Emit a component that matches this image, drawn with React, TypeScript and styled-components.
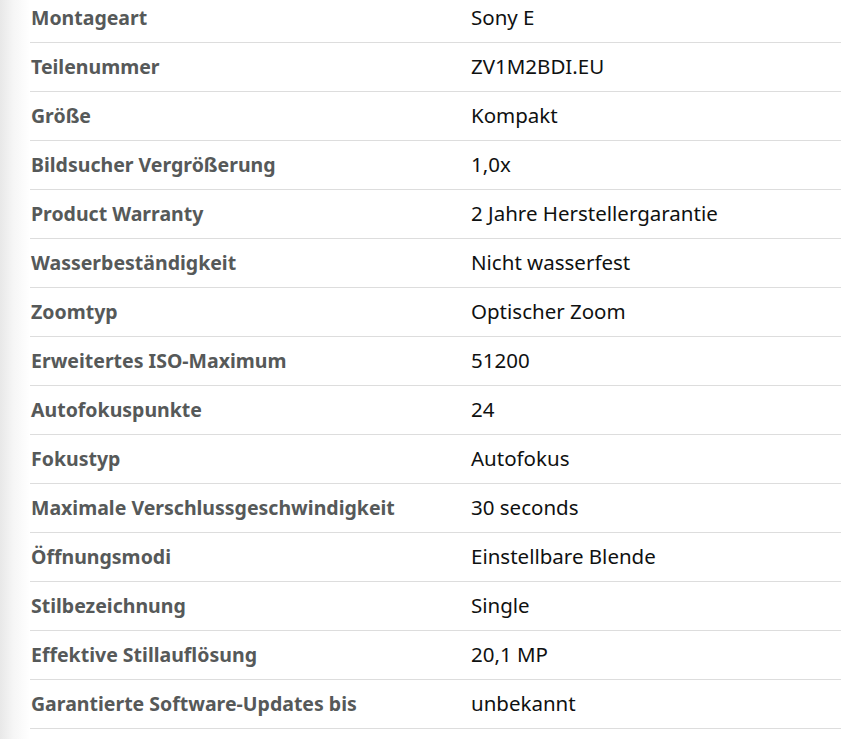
import React from 'react';
import styled, { createGlobalStyle } from 'styled-components';

const GlobalStyle = createGlobalStyle`
  html, body {
    margin: 0;
    padding: 0;
    background: #ffffff;
    overflow: hidden;
  }
`;

const Page = styled.div`
  display: flex;
  height: 739px;
  overflow: hidden;
  font-family: 'Noto Sans', 'Liberation Sans', Arial, sans-serif;
`;

const EdgeShadow = styled.div`
  flex: 0 0 30px;
  background: linear-gradient(to right, #e8e8e8 0%, #f6f6f6 45%, #ffffff 100%);
`;

const SpecTable = styled.div`
  flex: 1;
  margin-top: -6px;
`;

const SpecRow = styled.div`
  display: grid;
  grid-template-columns: 441px 1fr;
  align-items: center;
  box-sizing: border-box;
  height: 49px;
  padding-bottom: 2px;
  border-bottom: 1px solid #dddddd;
`;

const Label = styled.div`
  padding-left: 1px;
  font-size: 19.5px;
  font-weight: 700;
  color: #565959;
  white-space: nowrap;
`;

const Value = styled.div`
  font-size: 20.5px;
  color: #0f1111;
  white-space: nowrap;
`;

const specs: [string, string][] = [
    ['Montageart', 'Sony E'],
    ['Teilenummer', 'ZV1M2BDI.EU'],
    ['Größe', 'Kompakt'],
    ['Bildsucher Vergrößerung', '1,0x'],
    ['Product Warranty', '2 Jahre Herstellergarantie'],
    ['Wasserbeständigkeit', 'Nicht wasserfest'],
    ['Zoomtyp', 'Optischer Zoom'],
    ['Erweitertes ISO-Maximum', '51200'],
    ['Autofokuspunkte', '24'],
    ['Fokustyp', 'Autofokus'],
    ['Maximale Verschlussgeschwindigkeit', '30 seconds'],
    ['Öffnungsmodi', 'Einstellbare Blende'],
    ['Stilbezeichnung', 'Single'],
    ['Effektive Stillauflösung', '20,1 MP'],
    ['Garantierte Software-Updates bis', 'unbekannt'],
];

const App = () => {
    return (
        <>
            <GlobalStyle />
            <Page>
                <EdgeShadow />
                <SpecTable>
                    {specs.map(([label, value], index) => (
                        <SpecRow key={index}>
                            <Label>{label}</Label>
                            <Value>{value}</Value>
                        </SpecRow>
                    ))}
                </SpecTable>
            </Page>
        </>
    );
};

export default App;
